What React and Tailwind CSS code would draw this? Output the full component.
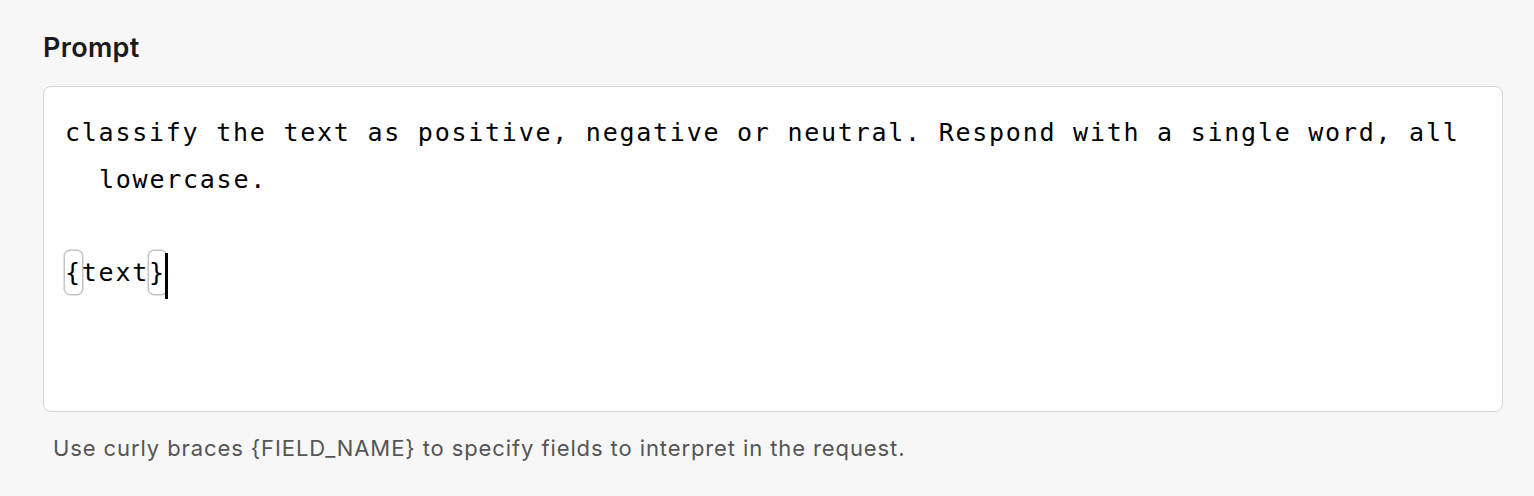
import React from 'react';

const Brace = ({ children }) => (
    <span className='rounded-[5px] py-[7px] ring-[1.5px] ring-[#c4c4c4]'>{children}</span>
);

const App = () => {
    return (
        <div className='min-h-[496px] bg-[#f7f7f7] pr-[31px] pl-[43px] pt-[31px] font-["Inter",sans-serif]'>
            <h3 className='text-[27px] font-semibold leading-[34px] tracking-[0.3px] text-[#1a1a1a]'>Prompt</h3>
            <div className='mt-[21px] h-[326px] rounded-[8px] border border-[#d6d6d6] bg-white pt-[23px] pr-[20px] pl-[55px] font-["DejaVu_Sans_Mono",monospace] text-[25px] leading-[46.7px] tracking-[1.75px] text-black'>
                <p className='-indent-[34px]'>classify the text as positive, negative or neutral. Respond with a single word, all lowercase.</p>
                <p className='-indent-[34px] h-[46.7px]'></p>
                <p className='-indent-[34px] flex items-center'>
                    <span>
                        <Brace>{'{'}</Brace>text<Brace>{'}'}</Brace>
                    </span>
                    <span className='-ml-[1px] inline-block h-[46px] w-[3px] translate-y-[3px] bg-black'></span>
                </p>
            </div>
            <p className='mt-[21px] pl-[10px] text-[22px] leading-[30px] tracking-[0.9px] text-[#555555]'>Use curly braces {'{FIELD_NAME}'} to specify fields to interpret in the request.</p>
        </div>
    );
};

export default App;
